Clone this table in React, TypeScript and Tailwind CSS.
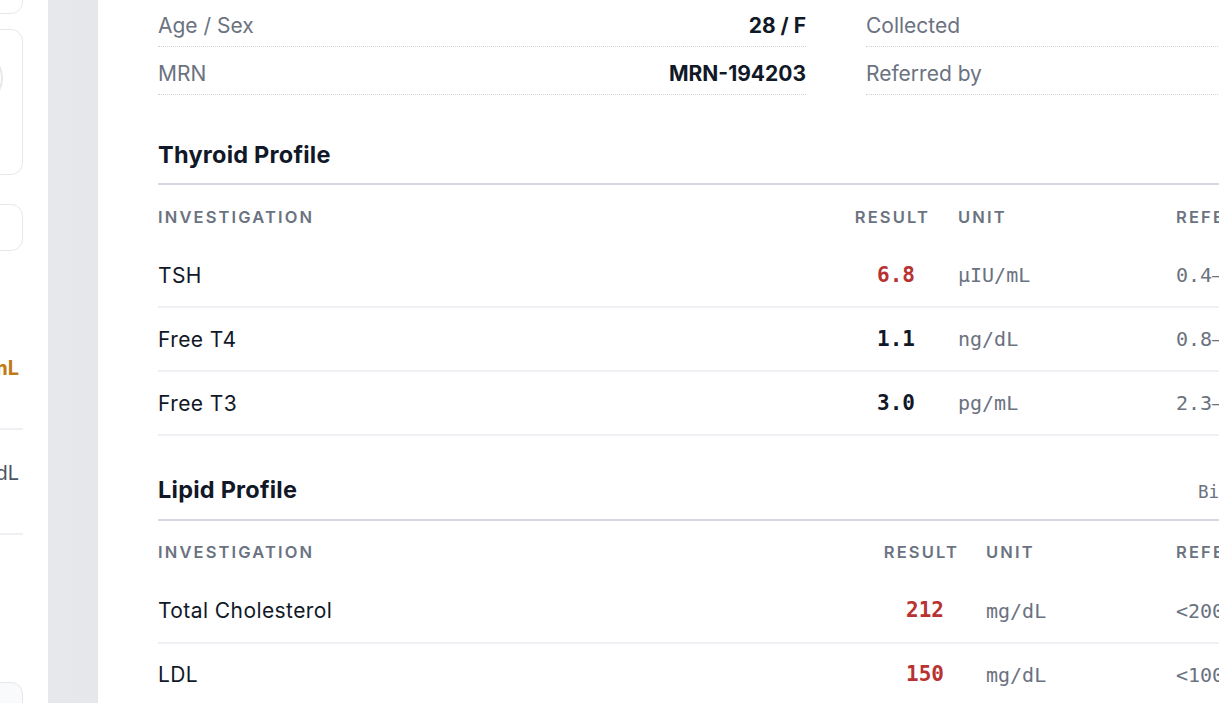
import React from "react";

type Row = {
  name: string;
  result: string;
  flag?: boolean;
  unit: string;
  ref: string;
};

type Section = {
  title: string;
  method: string;
  cols: string;
  unitPad: string;
  top: string;
  rows: Row[];
};

const sans = "font-['Inter','Noto_Sans',sans-serif]";
const mono = "font-['DejaVu_Sans_Mono','Liberation_Mono',monospace]";

const sections: Section[] = [
  {
    title: "Thyroid Profile",
    method: "CLIA · Serum",
    cols: "grid-cols-[680px_90px_248px_338px]",
    unitPad: "pl-[30px]",
    top: "mt-[45px]",
    rows: [
      { name: "TSH", result: "6.8", flag: true, unit: "μIU/mL", ref: "0.4–4.0" },
      { name: "Free T4", result: "1.1", unit: "ng/dL", ref: "0.8–1.8" },
      { name: "Free T3", result: "3.0", unit: "pg/mL", ref: "2.3–4.2" },
    ],
  },
  {
    title: "Lipid Profile",
    method: "Biochemistry · Serum (Fasting)",
    cols: "grid-cols-[709px_90px_219px_338px]",
    unitPad: "pl-[29px]",
    top: "mt-[39px]",
    rows: [
      { name: "Total Cholesterol", result: "212", flag: true, unit: "mg/dL", ref: "<200" },
      { name: "LDL", result: "150", flag: true, unit: "mg/dL", ref: "<100" },
      { name: "HDL", result: "46", unit: "mg/dL", ref: ">40" },
      { name: "Triglycerides", result: "168", flag: true, unit: "mg/dL", ref: "<150" },
    ],
  },
];

const meta = [
  [
    { label: "Age / Sex", value: "28 / F" },
    { label: "MRN", value: "MRN-194203" },
  ],
  [
    { label: "Collected", value: "12 Mar 2025, 08:10" },
    { label: "Referred by", value: "Dr. A. Menon" },
  ],
];

function MetaRow({ label, value }: { label: string; value: string }) {
  return (
    <div className="flex justify-between items-center pt-[13px] pb-[6px] leading-[28px] border-b border-dotted border-[#cfd3da] text-[21px]">
      <span className="text-[#6b7280]">{label}</span>
      <span className="font-bold text-[#111827]">{value}</span>
    </div>
  );
}

function SideBar() {
  return (
    <div className="w-[48px] shrink-0 overflow-hidden bg-white">
      <div className={`w-[260px] -ml-[237px] flex flex-col ${sans}`}>
        <div className="h-[60px] -mt-[46px] rounded-xl border border-[#e5e7eb]" />
        <div className="relative mt-[15px] h-[146px] rounded-xl border border-[#e5e7eb]">
          <div className="absolute right-[19px] top-[20px] w-[56px] h-[56px] rounded-full border-2 border-[#e5e7eb]" />
        </div>
        <div className="mt-[29px] h-[47px] rounded-xl border border-[#e5e7eb]" />
        <div className="mt-[102px] h-[30px] text-right pr-[4px] text-[20px] leading-[30px] font-bold text-[#c27a12]">
          12.4 mg/mL
        </div>
        <div className="mt-[45px] border-b-2 border-[#eef0f3]" />
        <div className="mt-[28px] h-[30px] text-right pr-[4px] text-[20px] leading-[30px] text-[#4b5563]">
          118 mg/dL
        </div>
        <div className="mt-[45px] border-b-2 border-[#eef0f3]" />
        <div className="mt-[147px] h-[80px] rounded-xl border border-[#e5e7eb] bg-[#f9fafb]" />
      </div>
    </div>
  );
}

function ResultTable({ s }: { s: Section }) {
  return (
    <section className={s.top}>
      <div className="flex justify-between items-baseline pb-[13px] border-b-2 border-[#d5d9df]">
        <h2 className="text-[23.5px] leading-[30px] tracking-[0.01em] font-bold text-[#111827]">{s.title}</h2>
        <span className={`${mono} text-[17.5px] text-[#6b7280]`}>{s.method}</span>
      </div>
      <div className={`grid ${s.cols} h-[59px] items-center pt-[5px] text-[16.5px] font-semibold tracking-[0.13em] text-[#6b7280]`}>
        <div>INVESTIGATION</div>
        <div className="text-right -mr-[2px]">RESULT</div>
        <div className={s.unitPad}>UNIT</div>
        <div>REFERENCE</div>
      </div>
      {s.rows.map((r) => (
        <div
          key={r.name}
          className={`grid ${s.cols} h-[64px] items-center border-b-2 border-[#eef0f3]`}
        >
          <div className="text-[21px] tracking-[0.02em] text-[#111827]">{r.name}</div>
          <div
            className={`text-right pr-[13px] ${mono} text-[21px] font-bold ${
              r.flag ? "text-[#b83232]" : "text-[#111827]"
            }`}
          >
            {r.result}
          </div>
          <div className={`${s.unitPad} ${mono} text-[20px] text-[#6b7280]`}>{r.unit}</div>
          <div className={`${mono} text-[20px] text-[#6b7280]`}>{r.ref}</div>
        </div>
      ))}
    </section>
  );
}

export default function App() {
  return (
    <div className={`flex h-[703px] w-full overflow-hidden bg-white ${sans}`}>
      <SideBar />
      <div className="flex-1 flex bg-gradient-to-r from-[#e7e8ec] to-[#d6d8de] pl-[50px]">
        <main className="w-[1476px] shrink-0 bg-white px-[60px]">
          <div className="-mt-[1px] grid grid-cols-2 gap-x-[60px] mb-[1px]">
            {meta.map((col, i) => (
              <div key={i}>
                {col.map((m) => (
                  <MetaRow key={m.label} label={m.label} value={m.value} />
                ))}
              </div>
            ))}
          </div>
          {sections.map((s) => (
            <ResultTable key={s.title} s={s} />
          ))}
        </main>
      </div>
    </div>
  );
}
